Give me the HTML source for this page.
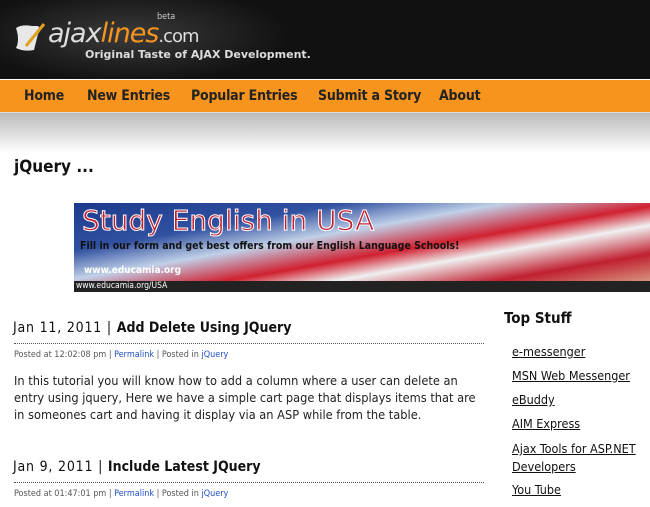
<!DOCTYPE html>
<html><head><style>
*{margin:0;padding:0;box-sizing:border-box}
body{width:650px;height:507px;overflow:hidden;background:#fff;font-family:"DejaVu Sans","Liberation Sans",sans-serif;font-stretch:condensed;position:relative}
.a{position:absolute;white-space:nowrap}
#hd{position:absolute;left:0;top:0;width:650px;height:80px;background:radial-gradient(ellipse 200px 60px at 130px 35px,#3a3a3a,#111 80%)}
#nav{position:absolute;left:0;top:79px;width:650px;height:34px;background:#f7941d;border-top:1px solid #fff;border-bottom:1px solid #e0e0e0}
#nav span{position:absolute;top:8px;font-size:14px;font-weight:bold;color:#222;letter-spacing:-0.2px}
#gr{position:absolute;left:0;top:113px;width:650px;height:40px;background:linear-gradient(#bbb,#fff)}
.t{font-size:14px;color:#111}
.t .d{letter-spacing:0.8px}
.t b{font-weight:bold}
.dot{position:absolute;left:14px;width:470px;border-top:1px dotted #555}
.m{font-size:9px;color:#555}
.m i{font-style:normal;color:#2050c0}
.p{font-size:12.7px;color:#222;line-height:17px}
.s{font-size:12.5px;color:#111;text-decoration:underline}
</style></head><body>
<div id="hd">
<svg class="a" style="left:12px;top:20px" width="36" height="36"><path d="M4 8 Q10 4 20 6 L26 6 Q30 10 26 14 L22 30 Q12 32 4 28 Q8 20 4 8Z" fill="#e8e8e8"/><path d="M14 26 L32 4" stroke="#e0a020" stroke-width="3"/></svg>
<div class="a" style="left:48px;top:18px;font-size:27px;color:#ddd;font-family:'DejaVu Sans',sans-serif;font-stretch:normal;letter-spacing:-1px;font-style:italic">ajax<span style="color:#f7941d">lines</span><span style="font-size:18px;font-style:normal">.com</span></div>
<div class="a" style="left:157px;top:12px;font-size:9px;color:#ccc">beta</div>
<div class="a" style="left:85px;top:48px;font-size:11px;color:#ddd;font-weight:bold;font-stretch:normal">Original Taste of AJAX Development.</div>
</div>
<div id="nav"><span style="left:24px">Home</span><span style="left:87px">New Entries</span><span style="left:191px">Popular Entries</span><span style="left:318px">Submit a Story</span><span style="left:439px">About</span></div>
<div id="gr"></div>
<div class="a" style="left:14px;top:157px;font-size:17px;font-weight:bold;color:#111">jQuery ...</div>
<div class="a" style="left:74px;top:203px;width:576px;height:89px;background:linear-gradient(170deg,#1c3a8c 0%,#3050a0 25%,#c0d0e8 40%,#d02030 55%,#f0f0f0 65%,#c02030 80%,#e0c0a0 100%)">
<div class="a" style="left:8px;top:1px;font-size:28px;color:#c02030;font-stretch:normal;-webkit-text-stroke:1px #fff">Study English in USA</div>
<div class="a" style="left:6px;top:37px;font-size:10.5px;color:#111;font-weight:bold">Fill in our form and get best offers from our English Language Schools!</div>
<div class="a" style="left:10px;top:62px;font-size:10px;color:#fff;font-weight:bold">www.educamia.org</div>
<div class="a" style="left:0;top:78px;width:576px;height:11px;background:#222"></div>
<div class="a" style="left:2px;top:78px;font-size:8.5px;color:#fff">www.educamia.org/USA</div>
</div>
<div class="a t" style="left:13px;top:320px"><span class="d">Jan 11, 2011 | </span><b>Add Delete Using JQuery</b></div>
<div class="dot" style="top:343px"></div>
<div class="a m" style="left:14px;top:350px">Posted at 12:02:08 pm | <i>Permalink</i> | Posted in <i>jQuery</i></div>
<div class="a p" style="left:14px;top:372px">In this tutorial you will know how to add a column where a user can delete an<br>entry using jquery, Here we have a simple cart page that displays items that are<br>in someones cart and having it display via an ASP while from the table.</div>
<div class="a t" style="left:13px;top:459px"><span class="d">Jan 9, 2011 | </span><b>Include Latest JQuery</b></div>
<div class="dot" style="top:482px"></div>
<div class="a m" style="left:14px;top:489px">Posted at 01:47:01 pm | <i>Permalink</i> | Posted in <i>jQuery</i></div>
<div class="a" style="left:504px;top:309px;font-size:15px;font-weight:bold;color:#111">Top Stuff</div>
<div class="a s" style="left:512px;top:344px">e-messenger</div>
<div class="a s" style="left:512px;top:368px">MSN Web Messenger</div>
<div class="a s" style="left:512px;top:392px">eBuddy</div>
<div class="a s" style="left:512px;top:416px">AIM Express</div>
<div class="a s" style="left:512px;top:440px;line-height:18px">Ajax Tools for ASP.NET<br>Developers</div>
<div class="a s" style="left:512px;top:482px">You Tube</div>
</body></html>
